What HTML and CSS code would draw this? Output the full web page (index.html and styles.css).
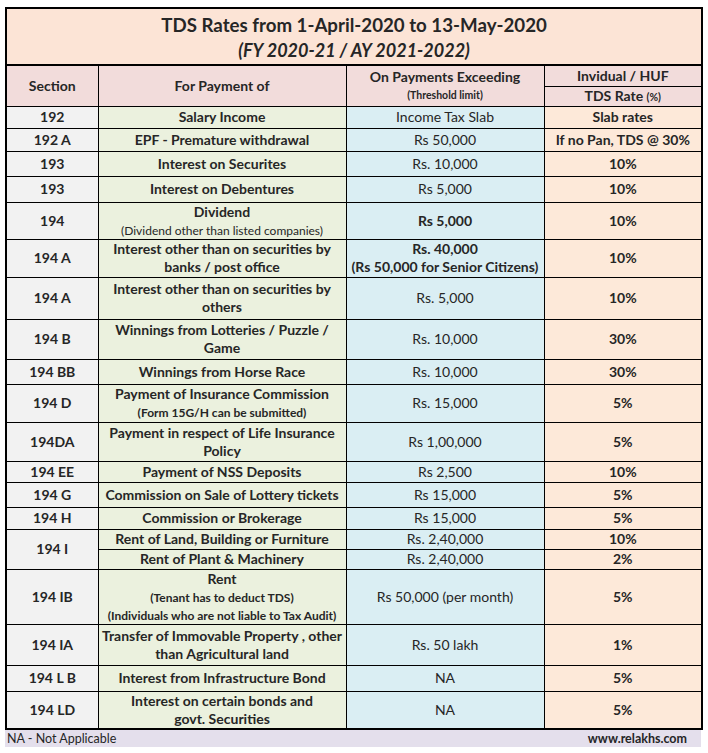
FILE: index.html
```html
<!DOCTYPE html>
<html>
<head>
<meta charset="utf-8">
<link rel="stylesheet" href="styles.css">
</head>
<body>
<div class="sheet">
<table class="tds">
  <colgroup>
    <col class="c-sec"><col class="c-pay"><col class="c-thr"><col class="c-rate">
  </colgroup>
  <tr class="h57">
    <td colspan="4" class="title">
      <div class="t1">TDS Rates from 1-April-2020 to 13-May-2020</div>
      <div class="t2">(FY 2020-21 / AY 2021-2022)</div>
    </td>
  </tr>
  <tr class="h21">
    <td rowspan="2" class="hd">Section</td>
    <td rowspan="2" class="hd">For Payment of</td>
    <td rowspan="2" class="hd">On Payments Exceeding<br><span class="sm">(Threshold limit)</span></td>
    <td class="hd">Invidual / HUF</td>
  </tr>
  <tr class="h20">
    <td class="hd">TDS Rate <span class="sm">(%)</span></td>
  </tr>
  <tr class="h22"><td class="sec">192</td><td class="pay">Salary Income</td><td class="thr">Income Tax Slab</td><td class="rate">Slab rates</td></tr>
  <tr class="h23"><td class="sec">192 A</td><td class="pay">EPF - Premature withdrawal</td><td class="thr">Rs 50,000</td><td class="rate">If no Pan, TDS @ 30%</td></tr>
  <tr class="h25"><td class="sec">193</td><td class="pay">Interest on Securites</td><td class="thr">Rs. 10,000</td><td class="rate">10%</td></tr>
  <tr class="h26"><td class="sec">193</td><td class="pay">Interest on Debentures</td><td class="thr">Rs 5,000</td><td class="rate">10%</td></tr>
  <tr class="h37"><td class="sec">194</td><td class="pay">Dividend<br><span class="note">(Dividend other than listed companies)</span></td><td class="thr b">Rs 5,000</td><td class="rate">10%</td></tr>
  <tr class="h38"><td class="sec">194 A</td><td class="pay">Interest other than on securities by<br>banks / post office</td><td class="thr b">Rs. 40,000<br>(Rs 50,000 for Senior Citizens)</td><td class="rate">10%</td></tr>
  <tr class="h42"><td class="sec">194 A</td><td class="pay">Interest other than on securities by<br>others</td><td class="thr">Rs. 5,000</td><td class="rate">10%</td></tr>
  <tr class="h40"><td class="sec">194 B</td><td class="pay">Winnings from Lotteries / Puzzle /<br>Game</td><td class="thr">Rs. 10,000</td><td class="rate">30%</td></tr>
  <tr class="h25"><td class="sec">194 BB</td><td class="pay">Winnings from Horse Race</td><td class="thr">Rs. 10,000</td><td class="rate">30%</td></tr>
  <tr class="h38"><td class="sec">194 D</td><td class="pay">Payment of Insurance Commission<br><span class="note b">(Form 15G/H can be submitted)</span></td><td class="thr">Rs. 15,000</td><td class="rate">5%</td></tr>
  <tr class="h39"><td class="sec">194DA</td><td class="pay">Payment in respect of Life Insurance<br>Policy</td><td class="thr">Rs 1,00,000</td><td class="rate">5%</td></tr>
  <tr class="h21"><td class="sec">194 EE</td><td class="pay">Payment of NSS Deposits</td><td class="thr">Rs 2,500</td><td class="rate">10%</td></tr>
  <tr class="h25"><td class="sec">194 G</td><td class="pay">Commission on Sale of Lottery tickets</td><td class="thr">Rs 15,000</td><td class="rate">5%</td></tr>
  <tr class="h22"><td class="sec">194 H</td><td class="pay">Commission or Brokerage</td><td class="thr">Rs 15,000</td><td class="rate">5%</td></tr>
  <tr class="h20"><td rowspan="2" class="sec">194 I</td><td class="pay">Rent of Land, Building or Furniture</td><td class="thr">Rs. 2,40,000</td><td class="rate">10%</td></tr>
  <tr class="h20"><td class="pay">Rent of Plant &amp; Machinery</td><td class="thr">Rs. 2,40,000</td><td class="rate">2%</td></tr>
  <tr class="h53"><td class="sec">194 IB</td><td class="pay">Rent<br><span class="note b">(Tenant has to deduct TDS)</span><br><span class="note b">(Individuals who are not liable to Tax Audit)</span></td><td class="thr">Rs 50,000 (per month)</td><td class="rate">5%</td></tr>
  <tr class="h41"><td class="sec">194 IA</td><td class="pay">Transfer of Immovable Property , other<br>than Agricultural land</td><td class="thr">Rs. 50 lakh</td><td class="rate">1%</td></tr>
  <tr class="h26"><td class="sec">194 L B</td><td class="pay">Interest from Infrastructure Bond</td><td class="thr">NA</td><td class="rate">5%</td></tr>
  <tr class="h38"><td class="sec">194 LD</td><td class="pay">Interest on certain bonds and<br>govt. Securities</td><td class="thr">NA</td><td class="rate">5%</td></tr>
</table>
<div class="foot">
  <span class="na">NA - Not Applicable</span>
  <span class="site">www.relakhs.com</span>
</div>
</div>
</body>
</html>
```
FILE: styles.css
```css
html, body {
  margin: 0;
  padding: 0;
  background: #ffffff;
}
body {
  font-family: Lato, "Open Sans", "Liberation Sans", sans-serif;
  color: #262626;
}
.sheet {
  padding: 7px 0 0 5px;
  width: 696px;
}
.tds {
  border-collapse: collapse;
  table-layout: fixed;
  width: 696px;
  border: 2px solid #000;
}
.c-sec { width: 92px; }
.c-pay { width: 248px; }
.c-thr { width: 198px; }
.c-rate { width: 158px; }
.tds td {
  border: 1px solid #000;
  padding: 0 2px;
  text-align: center;
  vertical-align: middle;
  font-size: 14px;
  line-height: 18px;
  font-weight: 700;
}
.h20 { height: 20px; }
.h21 { height: 21px; }
.h22 { height: 22px; }
.h23 { height: 23px; }
.h25 { height: 25px; }
.h26 { height: 26px; }
.h37 { height: 37px; }
.h38 { height: 38px; }
.h39 { height: 39px; }
.h40 { height: 40px; }
.h41 { height: 41px; }
.h42 { height: 42px; }
.h53 { height: 53px; }
.h57 { height: 57px; }

.tds td.title {
  background: #fce4d6;
  border-bottom: 2px solid #000;
}
.t1 {
  font-size: 18.7px;
  line-height: 26px;
  font-weight: 700;
}
.t2 {
  font-size: 18px;
  line-height: 24px;
  font-weight: 700;
  font-style: italic;
}
.tds td.hd {
  background: #f2dcdb;
  line-height: 17px;
}
.sm {
  font-size: 10.5px;
}
.tds td.sec { background: #f2f2f2; }
.tds td.pay { background: #ebf1de; }
.tds td.thr {
  background: #daeef3;
  font-weight: 400;
}
.tds td.thr.b { font-weight: 700; }
.tds td.rate { background: #fde9d9; }
.note {
  font-size: 12px;
  line-height: 16px;
  font-weight: 400;
}
.note.b { font-weight: 700; }
.foot {
  background: #e4dfec;
  height: 17px;
  display: flex;
  justify-content: space-between;
  align-items: center;
  padding: 0 14px 0 2px;
  font-size: 12.5px;
}
.na { font-weight: 400; }
.site { font-weight: 700; }
```
